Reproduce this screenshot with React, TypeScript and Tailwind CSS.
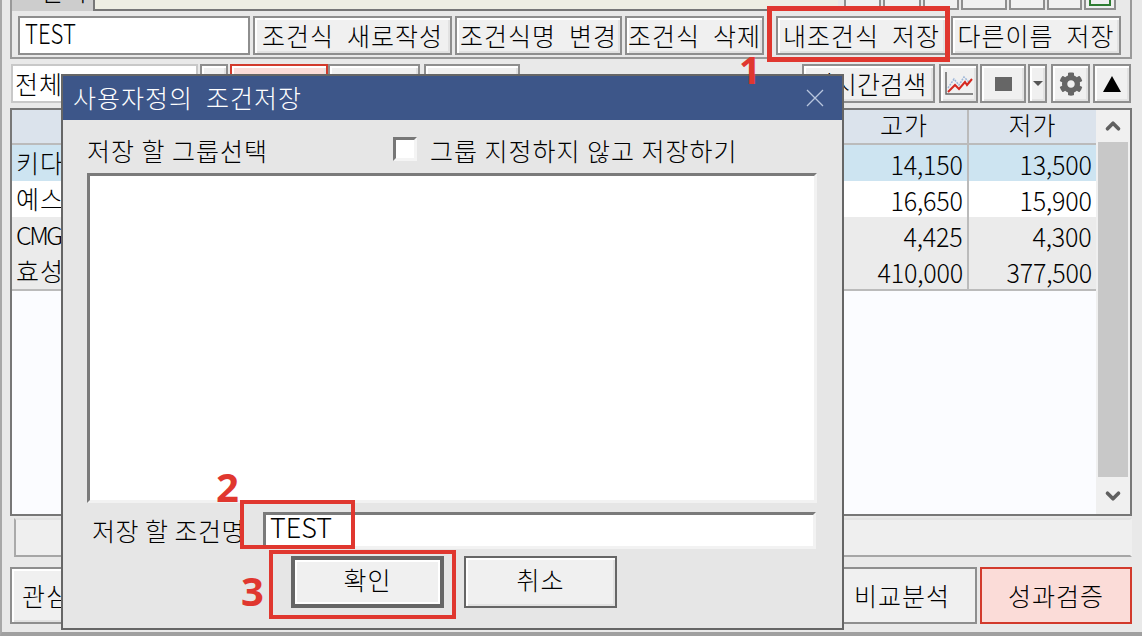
import { ChevronUp, ChevronDown } from 'lucide-react'
import { FaCog } from 'react-icons/fa'
import type { ReactNode } from 'react'

const raised = 'flex items-center justify-center border-2 border-[#8e8e8e] bg-[#f0f0f0] shadow-[inset_2px_2px_0_#fff,inset_-2px_-2px_0_#e2e2e2] text-black whitespace-pre'

const ROWS = [
  { name: '키다리', high: '14,150', low: '13,500', bg: 'bg-[#cde4f1]', nameCls: '' },
  { name: '예스코', high: '16,650', low: '15,900', bg: 'bg-white', nameCls: '' },
  { name: 'CMG제약', high: '4,425', low: '4,300', bg: 'bg-[#ebebeb]', nameCls: 'tracking-[-2.5px]' },
  { name: '효성', high: '410,000', low: '377,500', bg: 'bg-[#ebebeb]', nameCls: '' },
]

function Btn({ w, children, className = '' }: { w: string; children?: ReactNode; className?: string }) {
  return <div className={`${raised} ${w} ${className} h-full shrink-0`}>{children}</div>
}

function Num({ children }: { children: string }) {
  return <span className="inline-block origin-right scale-x-[0.93] tracking-[-0.2px] text-[27px] leading-none font-light">{children}</span>
}

function Mark({ className }: { className: string }) {
  return <div className={`absolute border-[#e0372f] ${className}`} />
}

function Dialog() {
  return (
    <div className="absolute left-[61px] top-[74px] w-[783px] h-[556px] border-2 border-[#666] bg-[#e6e6e6] flex flex-col">
      <div className="h-[44px] shrink-0 bg-[#3d5689] flex items-center justify-between pl-[10px] pr-[18px] text-white text-[25px] tracking-[1px] font-light whitespace-pre">
        <span>사용자정의  조건저장</span>
        <svg width="18" height="18" viewBox="0 0 18 18" stroke="#b9c6de" strokeWidth="1.3"><path d="M1 1l16 16M17 1L1 17" /></svg>
      </div>
      <div className="flex items-center h-[53px] shrink-0 pl-[24px] whitespace-pre text-[25px] tracking-[1px] font-light">
        <span className="w-[306px] pt-[9px]">저장 할 그룹선택</span>
        <span className="w-[24px] h-[24px] border-[3px] border-[#777] border-r-[#f4f4f4] border-b-[#f4f4f4] bg-white mr-[13px] mt-[5px]" />
        <span className="pt-[9px]">그룹 지정하지 않고 저장하기</span>
      </div>
      <div className="ml-[24px] w-[730px] h-[330px] shrink-0 bg-white border-[3px] border-[#7a7a7a] border-r-[#f2f2f2] border-b-[#f2f2f2]" />
      <div className="flex items-center mt-[9px] h-[37px] shrink-0 pl-[29px] text-[25px] tracking-[0.5px] font-light whitespace-pre">
        <span className="w-[171px] overflow-hidden">저장 할 조건명</span>
        <div className="w-[553px] h-full bg-white border-[3px] border-[#7a7a7a] border-r-[#f2f2f2] border-b-[#f2f2f2] pl-[4px] flex items-center text-[27px] leading-none tracking-[0px]">
          <span className="-mt-[9px]">TEST</span>
        </div>
      </div>
      <div className="flex mt-[7px] h-[52px] shrink-0 pl-[228px] gap-[20px] text-[25px] tracking-[1px] font-light">
        <div className="w-[153px] flex items-center justify-center border-[4px] border-[#666] bg-[#f0f0f0] shadow-[inset_2px_2px_0_#fff,inset_-2px_-2px_0_#fff]"><span className="-mt-[5px]">확인</span></div>
        <div className={`${raised} w-[153px] border-[#666]`}><span className="-mt-[5px]">취소</span></div>
      </div>
    </div>
  )
}

export default function App() {
  return (
    <div className="relative w-[1142px] h-[636px] overflow-hidden bg-[#e9e9e9] font-['Noto_Sans_CJK_KR',sans-serif] text-black text-[25px] tracking-[1px]">
      <div className="w-full h-full flex flex-col border-l-2 border-b-4 border-l-[#a8a8a8] border-b-[#a0a0a0] pl-[8px] pr-[10px]">
        {/* 조건식 패널 */}
        <div className="h-[59px] shrink-0 border-x-2 border-b-2 border-[#999] flex flex-col">
          <div className="h-[11px] flex shrink-0 overflow-hidden">
            <div className="w-[83px] bg-[#cdcdcd] border-r-2 border-[#777] flex justify-end items-end pr-[5px] overflow-hidden">
              <span className="leading-none mb-[8px] font-light">조건식</span>
            </div>
            <div className="w-[743px] bg-[#eeeee3] border-b-2 border-[#777]" />
            <div className="flex gap-[2px] ml-[6px]">
              {['w-[37px]', 'w-[38px]', 'w-[36px]', 'w-[46px]', 'w-[36px]', 'w-[35px]'].map((w, i) => (
                <div key={i} className={`${w} h-[10px] border-2 border-t-0 border-[#8e8e8e] bg-[#f0f0f0]`} />
              ))}
              <div className="w-[32px] h-[10px] border-2 border-t-0 border-[#8e8e8e] bg-[#f0f0f0] pt-0 px-[3px]">
                <div className="h-[6px] border-2 border-t-0 border-[#2e7d32]" />
              </div>
            </div>
          </div>
          <div className="flex h-[39px] mt-[5px] pl-[6px] font-light">
            <div className="w-[232px] h-full border-2 border-[#8e8e8e] bg-white pl-[5px] flex items-center text-[27px] leading-none tracking-[0px] shrink-0">
              <span className="inline-block origin-left scale-x-[0.82] -mt-[6px]">TEST</span>
            </div>
            <Btn w="w-[199px] ml-[3px]">조건식  새로작성</Btn>
            <Btn w="w-[167px] ml-[3px]">조건식명  변경</Btn>
            <Btn w="w-[139px] ml-[3px]">조건식  삭제</Btn>
            <Btn w="w-[171px] ml-[12px]">내조건식  저장</Btn>
            <Btn w="w-[170px] ml-[4px]">다른이름  저장</Btn>
          </div>
        </div>

        {/* 검색 툴바 */}
        <div className="flex h-[39px] mt-[5px] shrink-0 pl-px font-light">
          <div className="w-[187px] border-2 border-[#c8c8c8] bg-white pl-[2px] flex items-center shrink-0">전체</div>
          <Btn w="w-[28px] ml-[2px]" />
          <Btn w="w-[98px] ml-[2px] border-[#d23a2c] bg-[#fbdcd8]" />
          <Btn w="w-[92px]" />
          <Btn w="w-[96px] ml-[4px]" />
          <Btn w="w-[133px] ml-[282px] tracking-[0.2px]">실시간검색</Btn>
          <Btn w="w-[39px] ml-[4px]">
            <svg width="30" height="26" viewBox="0 0 30 26" fill="none">
              <path d="M2 1v22h27" stroke="#666" strokeWidth="1.5" />
              <path d="M4 17l6-9 5 6 5-8 6 6" stroke="#9db6d8" strokeWidth="1.5" strokeDasharray="2 1" />
              <path d="M4 21l7-7 4 4 6-7 2 3 5-6" stroke="#d6281f" strokeWidth="2" />
            </svg>
          </Btn>
          <Btn w="w-[46px] ml-[2px]"><span className="w-[17px] h-[14px] bg-[#666]" /></Btn>
          <Btn w="w-[19px] ml-[2px]"><span className="w-0 h-0 border-x-[5px] border-t-[5px] border-x-transparent border-t-[#555]" /></Btn>
          <Btn w="w-[39px] ml-[4px]"><FaCog size={24} color="#666" /></Btn>
          <Btn w="w-[38px] ml-[3px]"><span className="w-0 h-0 border-x-[9px] border-b-[16px] border-x-transparent border-b-black" /></Btn>
        </div>

        {/* 종목 테이블 */}
        <div className="flex h-[408px] mt-[5px] shrink-0 border-2 border-[#777] bg-[#fbfcff]">
          <div className="flex-1 flex flex-col min-w-0">
            <div className="flex h-[35px] shrink-0 bg-[#dbe3ec] border-b-2 border-[#bbb] font-light">
              <div className="flex-1" />
              <div className="w-[128px] flex items-center justify-center border-l-2 border-[#bbb]"><span className="-mt-[3px]">고가</span></div>
              <div className="w-[129px] flex items-center justify-center border-l-2 border-[#bbb]"><span className="-mt-[3px]">저가</span></div>
            </div>
            <div className="flex flex-col border-b-2 border-[#bbb]">
              {ROWS.map((r) => (
                <div key={r.name} className={`flex h-[36px] ${r.bg} font-light`}>
                  <div className={`flex-1 flex items-center pl-[4px] whitespace-pre ${r.nameCls}`}>{r.name}</div>
                  <div className="w-[128px] flex items-center justify-end pr-[4px] border-l-2 border-[#bbb]"><Num>{r.high}</Num></div>
                  <div className="w-[129px] flex items-center justify-end pr-[4px] border-l-2 border-[#bbb]"><Num>{r.low}</Num></div>
                </div>
              ))}
            </div>
          </div>
          <div className="w-[34px] shrink-0 flex flex-col bg-[#f0f0f0] px-[2px]">
            <div className="h-[32px] shrink-0 flex items-center justify-center"><ChevronUp size={22} strokeWidth={4} color="#606060" /></div>
            <div className="h-[335px] shrink-0 bg-[#c8c8c8]" />
            <div className="flex-1 flex items-center justify-center"><ChevronDown size={22} strokeWidth={4} color="#606060" /></div>
          </div>
        </div>

        {/* 상태줄 */}
        <div className="h-[39px] mt-[2px] mx-[4px] shrink-0 bg-[#efefef] border-2 border-[#efefef] border-l-[#aaa] border-t-[#e2e2e2] border-b-[#a6a6a6] mr-0" />

        {/* 하단 버튼 */}
        <div className="flex h-[57px] mt-[10px] shrink-0 font-light">
          <Btn w="w-[60px] pl-[10px] justify-start!">관심</Btn>
          <div className="flex-1" />
          <Btn w="w-[140px] pr-[10px] border-[#1c4fb5] bg-[#cfe5f5] shadow-none">비교분석</Btn>
          <Btn w="w-[152px] ml-[3px] border-[#d23a2c] bg-[#fbdcd8] shadow-none">성과검증</Btn>
        </div>
      </div>

      <Dialog />

      {/* 빨간 안내 표시 */}
      <Mark className="left-[767px] top-[6px] w-[183px] h-[56px] border-[5px]" />
      <Mark className="left-[240px] top-[500px] w-[115px] h-[49px] border-[4px]" />
      <Mark className="left-[269px] top-[550px] w-[187px] h-[69px] border-[4px]" />
      <span className="absolute left-[739px] top-[50px] text-[38px] tracking-normal leading-none font-bold text-[#e0372f] font-['Open_Sans',sans-serif]">1</span>
      <span className="absolute left-[216px] top-[467px] text-[40px] tracking-normal leading-none font-bold text-[#e0372f] font-['Open_Sans',sans-serif]">2</span>
      <span className="absolute left-[241px] top-[571px] text-[40px] tracking-normal leading-none font-bold text-[#e0372f] font-['Open_Sans',sans-serif]">3</span>
    </div>
  )
}
